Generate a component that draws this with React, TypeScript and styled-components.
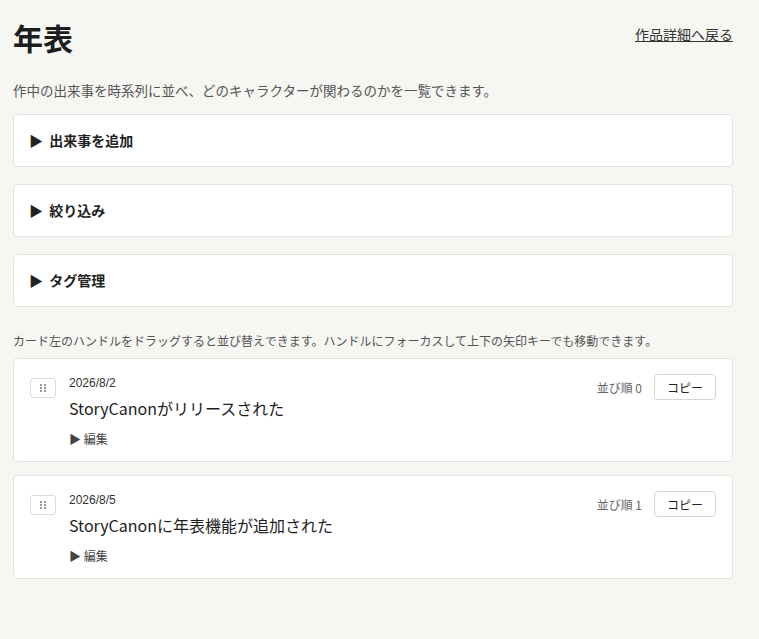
import React from 'react';
import styled, { createGlobalStyle } from 'styled-components';

const Global = createGlobalStyle`
  body {
    margin: 0;
    background: #f6f6f2;
    color: #222;
    font-family: "Noto Sans CJK JP", "Liberation Sans", sans-serif;
  }
`;

const Page = styled.div`
  width: 720px;
  padding: 14px 13px 40px;
  display: flex;
  flex-direction: column;
`;

const Head = styled.div`
  display: flex;
  justify-content: space-between;
  align-items: center;
  height: 46px;
`;

const Title = styled.h1`
  margin: 0;
  font-size: 30px;
  font-weight: 700;
  color: #1d1d1d;
`;

const BackLink = styled.a`
  font-size: 14px;
  color: #333;
  text-decoration: underline;
  margin-top: -6px;
`;

const Lead = styled.p`
  margin: 20px 0 14px;
  font-size: 13.5px;
  color: #555;
`;

const Panel = styled.details`
  background: #fff;
  border: 1px solid #e4e3dd;
  border-radius: 4px;
  margin-bottom: 17px;
  summary {
    padding: 15px 15px;
    font-size: 14px;
    font-weight: 700;
    line-height: 21px;
    cursor: pointer;
    list-style: none;
  }
`;

const Note = styled.p`
  margin: 8px 0 9px;
  font-size: 12px;
  color: #555;
`;

const Card = styled.div`
  background: #fff;
  border: 1px solid #e4e3dd;
  border-radius: 4px;
  padding: 15px 16px 14px 16px;
  display: flex;
  gap: 13px;
  margin-bottom: 13px;
`;

const Handle = styled.button`
  width: 26px;
  height: 20px;
  margin-top: 4px;
  background: #fff;
  border: 1px solid #dcdad3;
  border-radius: 3px;
  color: #777;
  font-size: 10px;
  padding: 0;
  display: flex;
  align-items: center;
  justify-content: center;
`;

const Body = styled.div`
  flex: 1;
`;

const Date = styled.div`
  font-size: 12px;
  color: #333;
  line-height: 18px;
  font-family: "Liberation Sans", sans-serif;
`;

const EventTitle = styled.div`
  font-size: 16px;
  color: #1d1d1d;
  line-height: 24px;
  margin-top: 4px;
`;

const Edit = styled.div`
  font-size: 12px;
  color: #444;
  margin-top: 10px;
`;

const Side = styled.div`
  display: flex;
  align-items: center;
  gap: 12px;
  align-self: flex-start;
`;

const Order = styled.span`
  font-size: 12px;
  color: #666;
`;

const CopyBtn = styled.button`
  width: 62px;
  height: 26px;
  background: #fff;
  border: 1px solid #d8d6cf;
  border-radius: 4px;
  font-size: 12px;
  color: #222;
  font-family: inherit;
`;

const events = [
  { date: '2026/8/2', title: 'StoryCanonがリリースされた', order: 0 },
  { date: '2026/8/5', title: 'StoryCanonに年表機能が追加された', order: 1 },
];

export default function App() {
  return (
    <Page>
      <Global />
      <Head>
        <Title>年表</Title>
        <BackLink>作品詳細へ戻る</BackLink>
      </Head>
      <Lead>作中の出来事を時系列に並べ、どのキャラクターが関わるのかを一覧できます。</Lead>
      {['出来事を追加', '絞り込み', 'タグ管理'].map((t) => (
        <Panel key={t}>
          <summary>▶&nbsp; {t}</summary>
        </Panel>
      ))}
      <Note>カード左のハンドルをドラッグすると並び替えできます。ハンドルにフォーカスして上下の矢印キーでも移動できます。</Note>
      {events.map((e) => (
        <Card key={e.date}>
          <Handle>
            <svg width="6" height="8" viewBox="0 0 6 8" fill="#666">
              <circle cx="1" cy="1" r="0.9" /><circle cx="5" cy="1" r="0.9" />
              <circle cx="1" cy="4" r="0.9" /><circle cx="5" cy="4" r="0.9" />
              <circle cx="1" cy="7" r="0.9" /><circle cx="5" cy="7" r="0.9" />
            </svg>
          </Handle>
          <Body>
            <Date>{e.date}</Date>
            <EventTitle>{e.title}</EventTitle>
            <Edit>▶ 編集</Edit>
          </Body>
          <Side>
            <Order>並び順 {e.order}</Order>
            <CopyBtn>コピー</CopyBtn>
          </Side>
        </Card>
      ))}
    </Page>
  );
}
